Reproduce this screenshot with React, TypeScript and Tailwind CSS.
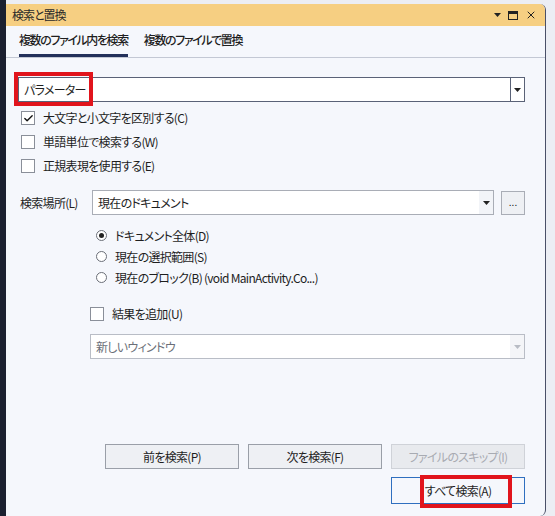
import { Check, X } from 'lucide-react';

const font = {
  fontFamily: '"Noto Sans CJK JP", "Noto Sans", sans-serif',
  fontFeatureSettings: '"palt"',
};

function CheckBox({ checked = false, label }: { checked?: boolean; label: string }) {
  return (
    <div className="flex items-center h-[24px]">
      <div className="w-[14px] h-[14px] border border-[#8a8f99] bg-white flex items-center justify-center">
        {checked && <Check className="w-[11px] h-[11px] text-[#111]" strokeWidth={3} />}
      </div>
      <span className="ml-[8px]">{label}</span>
    </div>
  );
}

function Radio({ checked = false, label }: { checked?: boolean; label: string }) {
  return (
    <div className="flex items-center h-[21px]">
      <div className="w-[11px] h-[11px] rounded-full border border-[#6b6f78] bg-white flex items-center justify-center">
        {checked && <div className="w-[5px] h-[5px] rounded-full bg-[#222]" />}
      </div>
      <span className="ml-[8px]">{label}</span>
    </div>
  );
}

function Caret({ light = false }: { light?: boolean }) {
  return (
    <svg width="7" height="4" viewBox="0 0 7 4">
      <path d="M0 0h7L3.5 4z" fill={light ? '#b8bcc4' : '#222'} />
    </svg>
  );
}

function Btn({ label, disabled = false }: { label: string; disabled?: boolean }) {
  return (
    <div
      className={`w-[134px] h-[25px] flex items-center justify-center border ${
        disabled ? 'border-[#cfd2d8] bg-[#e8eaee] text-[#a8abb2]' : 'border-[#9a9fa8] bg-[#eef0f4] text-[#1e1e1e]'
      }`}
    >
      {label}
    </div>
  );
}

export default function App() {
  return (
    <div
      className="w-[555px] h-[516px] flex bg-[#eceef4] text-[12px] tracking-[-0.7px] text-[#1e1e1e] overflow-hidden"
      style={font}
    >
      <div className="w-[6px] h-full bg-[#1b2030]" />
      <div className="flex flex-col flex-1 mt-[4px]">
        <div className="w-[540px] flex-1 flex flex-col rounded-tr-[6px] rounded-br-[6px] border-r border-[#4a5068] bg-[#f5f7fc] overflow-hidden">
          {/* title bar */}
          <div className="h-[22px] bg-[#f6cf82] flex items-center pl-[6px] pr-[8px]">
            <span className="text-[12px] tracking-[-1px] text-[#2a2a2a]">検索と置換</span>
            <div className="ml-auto flex items-center gap-[7px]">
              <Caret />
              <div className="w-[10px] h-[9px] border border-[#222] border-t-[3px]" />
              <X className="w-[12px] h-[12px] text-[#222]" strokeWidth={2} />
            </div>
          </div>

          {/* tabs */}
          <div className="h-[32px] flex items-end gap-[16px] pl-[13px] border-b border-[#c3c8d4]">
            <div className="flex flex-col h-full">
              <span className="flex-1 flex items-center font-medium text-[12px] tracking-[-1.4px]">複数のファイル内を検索</span>
              <div className="h-[3px] bg-[#23305a]" />
            </div>
            <div className="flex flex-col h-full">
              <span className="flex-1 flex items-center font-medium text-[12px] tracking-[-1.4px]">複数のファイルで置換</span>
              <div className="h-[3px]" />
            </div>
          </div>

          {/* body */}
          <div className="flex flex-col pl-[12px] pr-[20px] pt-[19px] relative">
            <div className="h-[25px] flex border border-[#5a6277] bg-white">
              <div className="flex-1 flex items-center pl-[5px]">パラメーター</div>
              <div className="w-[14px] border-l border-[#5a6277] flex items-center justify-center">
                <Caret />
              </div>
            </div>
            <div className="absolute left-[8px] top-[14px] w-[79px] h-[34px] border-[4px] border-[#e1141c]" />

            <div className="flex flex-col pl-[3px] mt-[4px]">
              <CheckBox checked label="大文字と小文字を区別する(C)" />
              <CheckBox label="単語単位で検索する(W)" />
              <CheckBox label="正規表現を使用する(E)" />
            </div>

            <div className="flex items-center mt-[12px]">
              <span className="w-[74px] pl-[2px]">検索場所(L)</span>
              <div className="flex-1 h-[25px] flex border border-[#a9adb6] bg-white">
                <div className="flex-1 flex items-center pl-[5px]">現在のドキュメント</div>
                <div className="w-[14px] bg-[#f2f4f8] flex items-center justify-center">
                  <Caret />
                </div>
              </div>
              <div className="ml-[7px] w-[24px] h-[24px] border border-[#a9adb6] bg-[#eef0f4] flex items-center justify-center text-[10px] tracking-normal leading-none pb-[2px]">
                ...
              </div>
            </div>

            <div className="flex flex-col pl-[78px] mt-[10px]">
              <Radio checked label="ドキュメント全体(D)" />
              <Radio label="現在の選択範囲(S)" />
              <Radio label="現在のブロック(B) (void MainActivity.Co...)" />
            </div>

            <div className="pl-[72px] mt-[14px]">
              <CheckBox label="結果を追加(U)" />
              <div className="mt-[8px] h-[25px] flex border border-[#b9bdc6] bg-white text-[#6b6f78]">
                <div className="flex-1 flex items-center pl-[5px]">新しいウィンドウ</div>
                <div className="w-[14px] bg-[#f4f5f8] flex items-center justify-center">
                  <Caret light />
                </div>
              </div>
            </div>

            <div className="flex justify-end gap-[9px] mt-[85px]">
              <Btn label="前を検索(P)" />
              <Btn label="次を検索(F)" />
              <Btn label="ファイルのスキップ(I)" disabled />
            </div>

            <div className="flex justify-end mt-[8px] relative">
              <div className="w-[134px] h-[27px] flex items-center justify-center border border-[#2f6fbf] bg-[#f5f7fc]">
                すべて検索(A)
              </div>
              <div className="absolute right-[13px] top-[-2px] w-[92px] h-[33px] border-[4px] border-[#e1141c]" />
            </div>
          </div>
        </div>
      </div>
      <div className="w-[9px]" />
    </div>
  );
}
